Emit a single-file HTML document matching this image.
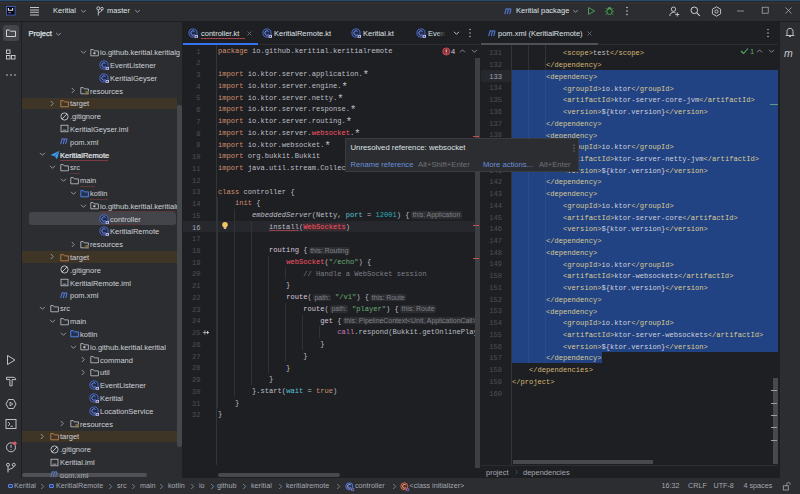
<!DOCTYPE html><html><head><meta charset="utf-8"><style>
html,body{margin:0;padding:0;width:800px;height:494px;overflow:hidden;background:#2B2D30;}
.a{position:absolute;}
.t{font-family:"Liberation Sans",sans-serif;white-space:nowrap;line-height:10px;}
.code{font-family:"Liberation Mono",monospace;font-size:7.1px;line-height:11.72px;height:11.72px;white-space:pre;color:#BCBEC4;}
.ln{font-family:"Liberation Mono",monospace;font-size:7.1px;line-height:11.72px;text-align:right;white-space:pre;}
.hint{display:inline-block;font-family:"Liberation Sans",sans-serif;font-size:6.9px;line-height:7.5px;height:7.5px;color:#7F8288;background:#2C2D31;border-radius:2px;padding:0 1.6px;position:relative;top:0.4px;vertical-align:baseline;}
svg{overflow:visible;}
.ast{display:inline-block;width:4.26px;text-align:center;font-size:10.5px;line-height:0;position:relative;top:2.1px;}
</style></head><body><div class="a" style="left:0px;top:0px;width:800px;height:494px;background:#2B2D30;"></div><div class="a" style="left:0px;top:0px;width:800px;height:1px;background:#2A4B6C;"></div><div class="a" style="left:0px;top:1px;width:800px;height:1px;background:#1F2A36;"></div><div class="a" style="left:0px;top:2px;width:800px;height:2px;background:#35302E;"></div><div class="a" style="left:0px;top:21px;width:800px;height:1px;background:#1E1F22;"></div><svg class="a" style="left:6px;top:6px;" width="10" height="10" viewBox="0 0 10 10" fill="none"><rect x="0.45" y="0.45" width="8.6" height="8.6" fill="#05060F" stroke="#4660C0" stroke-width="0.9"/><path d="M2.4 2.1V4.3H6.6V2.1" stroke="#E6E6E0" stroke-width="1.1"/><rect x="2.3" y="6.3" width="2.6" height="0.9" fill="#9A9AA8"/></svg><svg class="a" style="left:29px;top:5.5px;" width="11" height="10" viewBox="0 0 11 10" fill="none"><path d="M1 1.5H10M1 4H10M1 6.3H10M1 9H10" stroke="#C4C6CC" stroke-width="1.1"/></svg><div class="a t" style="left:53px;top:6px;color:#DFE1E5;font-size:7.5px;">Keritial</div><svg class="a" style="left:80px;top:8px;" width="7" height="6" viewBox="0 0 7 6" fill="none"><path d="M1.2 2L3.5 4.3L5.8 2" stroke="#9DA0A8" stroke-width="0.9"/></svg><svg class="a" style="left:96px;top:6px;" width="8" height="10" viewBox="0 0 8 10" fill="none"><circle cx="2.3" cy="2.3" r="1.5" stroke="#CED0D6" stroke-width="0.9"/><circle cx="6" cy="2.6" r="1.3" stroke="#CED0D6" stroke-width="0.9"/><path d="M2.3 3.8V9.5M6 3.9C6 6 3 5.5 2.5 7" stroke="#CED0D6" stroke-width="0.9"/></svg><div class="a t" style="left:107px;top:6px;color:#DFE1E5;font-size:7.5px;">master</div><svg class="a" style="left:134px;top:8px;" width="7" height="6" viewBox="0 0 7 6" fill="none"><path d="M1.2 2L3.5 4.3L5.8 2" stroke="#9DA0A8" stroke-width="0.9"/></svg><svg class="a" style="left:504px;top:8px;" width="9" height="7" viewBox="0 0 9 7" fill="none"><path d="M0.8 5.6L2.1 0.9M2.0 1.4C2.9 0.4 4.4 0.5 4.4 1.6L3.3 5.6M4.4 1.6C5.3 0.4 6.9 0.5 6.9 1.6L5.8 5.6" stroke="#5478D6" stroke-width="1.1" stroke-linecap="round"/></svg><div class="a t" style="left:516px;top:6px;color:#DFE1E5;font-size:7.5px;">Keritial package</div><svg class="a" style="left:571.5px;top:8px;" width="7" height="6" viewBox="0 0 7 6" fill="none"><path d="M1.2 2L3.5 4.3L5.8 2" stroke="#9DA0A8" stroke-width="0.9"/></svg><svg class="a" style="left:586px;top:5.8px;" width="10" height="10" viewBox="0 0 10 10" fill="none"><path d="M2.5 1.6L8.6 5L2.5 8.4Z" stroke="#529A5A" stroke-width="1.0" stroke-linejoin="round"/></svg><svg class="a" style="left:604px;top:5px;" width="11" height="11" viewBox="0 0 11 11" fill="none"><path d="M3.2 4.2C3.4 2.8 4.3 2 5.5 2C6.7 2 7.6 2.8 7.8 4.2Z" fill="#529A5A"/><ellipse cx="5.5" cy="6.7" rx="2.6" ry="2.8" stroke="#529A5A" stroke-width="1.0" fill="#1E3322"/><path d="M1.2 6.5H2.7M8.3 6.5H9.8M1.6 9.6L3.1 8.6M9.4 9.6L7.9 8.6M1.6 3.6L3.1 4.6M9.4 3.6L7.9 4.6" stroke="#529A5A" stroke-width="0.8"/></svg><svg class="a" style="left:625px;top:6px;" width="4" height="10" viewBox="0 0 4 10" fill="none"><circle cx="2" cy="1.5" r="0.8" fill="#CED0D6"/><circle cx="2" cy="5" r="0.8" fill="#CED0D6"/><circle cx="2" cy="8.5" r="0.8" fill="#CED0D6"/></svg><svg class="a" style="left:669px;top:5.5px;" width="11" height="11" viewBox="0 0 11 11" fill="none"><circle cx="4.5" cy="3.2" r="2.2" stroke="#CED0D6" stroke-width="0.9"/><path d="M0.8 10C1 7.3 2.5 6.3 4.5 6.3C5.3 6.3 6 6.5 6.5 6.8" stroke="#CED0D6" stroke-width="0.9"/><path d="M8.3 6.5V10.5M6.3 8.5H10.3" stroke="#CED0D6" stroke-width="0.9"/></svg><svg class="a" style="left:690px;top:6.3px;" width="11" height="11" viewBox="0 0 11 11" fill="none"><circle cx="4.3" cy="4.3" r="3.3" stroke="#CED0D6" stroke-width="1"/><path d="M6.8 6.8L9.8 9.8" stroke="#CED0D6" stroke-width="1.1"/></svg><svg class="a" style="left:711px;top:5.5px;" width="11" height="11" viewBox="0 0 11 11" fill="none"><path d="M5.5 0.8L9.6 3.2V7.8L5.5 10.2L1.4 7.8V3.2Z" stroke="#CED0D6" stroke-width="0.9" stroke-linejoin="round"/><circle cx="5.5" cy="5.5" r="1.6" stroke="#CED0D6" stroke-width="0.9"/></svg><svg class="a" style="left:736px;top:10px;" width="9" height="2" viewBox="0 0 9 2" fill="none"><path d="M1 1H8" stroke="#B4B7BD" stroke-width="0.7"/></svg><svg class="a" style="left:761px;top:6px;" width="9" height="9" viewBox="0 0 9 9" fill="none"><rect x="1.2" y="1.2" width="6" height="6" stroke="#B4B7BD" stroke-width="0.7"/></svg><svg class="a" style="left:784px;top:6px;" width="9" height="9" viewBox="0 0 9 9" fill="none"><path d="M1.5 1.5L7.5 7.5M7.5 1.5L1.5 7.5" stroke="#B4B7BD" stroke-width="0.75"/></svg><div class="a" style="left:21px;top:22px;width:1px;height:456px;background:#1E1F22;"></div><div class="a" style="left:3px;top:25px;width:16px;height:16px;background:#43454A;border-radius:3px;"></div><svg class="a" style="left:5px;top:27px;" width="12" height="12" viewBox="0 0 12 12" fill="none"><path d="M1.5 3V9.5H10.5V4.2H5.5L4.3 3Z" stroke="#DFE1E5" stroke-width="0.9" stroke-linejoin="round"/></svg><svg class="a" style="left:5px;top:49px;" width="12" height="12" viewBox="0 0 12 12" fill="none"><rect x="1.5" y="1" width="3.5" height="3.5" stroke="#CED0D6" stroke-width="0.9"/><rect x="1.5" y="6.5" width="3.5" height="3.5" stroke="#CED0D6" stroke-width="0.9"/><rect x="6.5" y="6.5" width="3.5" height="3.5" stroke="#CED0D6" stroke-width="0.9"/></svg><svg class="a" style="left:5px;top:73px;" width="12" height="4" viewBox="0 0 12 4" fill="none"><circle cx="2" cy="2" r="0.8" fill="#CED0D6"/><circle cx="6" cy="2" r="0.8" fill="#CED0D6"/><circle cx="10" cy="2" r="0.8" fill="#CED0D6"/></svg><svg class="a" style="left:5px;top:354px;" width="12" height="12" viewBox="0 0 12 12" fill="none"><path d="M2.5 1.5L10 6L2.5 10.5Z" stroke="#CED0D6" stroke-width="0.9" stroke-linejoin="round"/></svg><svg class="a" style="left:5px;top:375px;" width="12" height="12" viewBox="0 0 12 12" fill="none"><path d="M1.5 2.3H8.2C9.6 2.3 10.6 3.1 10.8 4.6H7.1V10.8H4.9V4.6H1.5Z" stroke="#CED0D6" stroke-width="0.9" stroke-linejoin="round"/></svg><svg class="a" style="left:5px;top:397.5px;" width="12" height="12" viewBox="0 0 12 12" fill="none"><path d="M1 6L3.5 1.5H8.5L11 6L8.5 10.5H3.5Z" stroke="#CED0D6" stroke-width="0.9" stroke-linejoin="round"/><path d="M5 4.2L7.8 6L5 7.8Z" stroke="#CED0D6" stroke-width="0.8" stroke-linejoin="round"/></svg><svg class="a" style="left:5px;top:418px;" width="12" height="12" viewBox="0 0 12 12" fill="none"><rect x="1" y="1.5" width="10" height="9" stroke="#CED0D6" stroke-width="0.9"/><path d="M3 4L5 6L3 8M5.5 8.3H8" stroke="#CED0D6" stroke-width="0.8"/></svg><svg class="a" style="left:5px;top:440.5px;" width="12" height="12" viewBox="0 0 12 12" fill="none"><circle cx="6" cy="6.3" r="4.5" stroke="#CED0D6" stroke-width="0.9"/><path d="M6 3.8V6.8M6 8V8.8" stroke="#CED0D6" stroke-width="0.9"/><circle cx="9.8" cy="2.2" r="1.8" fill="#E55765"/></svg><svg class="a" style="left:5px;top:462px;" width="12" height="12" viewBox="0 0 12 12" fill="none"><circle cx="3" cy="2.8" r="1.5" stroke="#CED0D6" stroke-width="0.9"/><circle cx="8.8" cy="2.8" r="1.5" stroke="#CED0D6" stroke-width="0.9"/><path d="M3 4.3V10.5M8.8 4.3C8.8 7 3.5 6.5 3 8.5" stroke="#CED0D6" stroke-width="0.9"/></svg><div class="a t" style="left:28.5px;top:29px;color:#DFE1E5;font-size:7.5px;-webkit-text-stroke:0.25px #DFE1E5;">Project</div><svg class="a" style="left:55px;top:31px;" width="7" height="6" viewBox="0 0 7 6" fill="none"><path d="M1.2 2L3.5 4.3L5.8 2" stroke="#9DA0A8" stroke-width="0.9"/></svg><div class="a" style="left:22px;top:45px;width:160px;height:433px;overflow:hidden;"></div><svg class="a" style="left:80px;top:48.9px;" width="7" height="6" viewBox="0 0 7 6" fill="none"><path d="M1 1.8L3.5 4.3L6 1.8" stroke="#9DA0A8" stroke-width="0.9"/></svg><svg class="a" style="left:90px;top:47.6px;" width="10" height="9" viewBox="0 0 10 9" fill="none"><path d="M0.8 1.6V7.8H8.4V2.9H4.3L3.3 1.6Z" stroke="#CED0D6" stroke-width="0.75" stroke-linejoin="round"/><rect x="3.4" y="4.3" width="2" height="1.9" fill="#CED0D6"/></svg><div class="a t" style="left:100px;top:48.1px;color:#CDD0D6;font-size:7.5px;">io.github.keritial.keritialg</div><svg class="a" style="left:99px;top:59.91px;" width="11" height="11" viewBox="0 0 11 11" fill="none"><circle cx="5" cy="5" r="4.1" fill="#1F2A4C" stroke="#5174DA" stroke-width="0.85"/><path d="M6.5 3.6C6.1 3.1 5.6 2.8 5 2.8C3.8 2.8 2.9 3.8 2.9 5C2.9 6.2 3.8 7.2 5 7.2C5.6 7.2 6.1 6.9 6.5 6.4" stroke="#8AA6F2" stroke-width="0.85"/><rect x="6.6" y="7" width="3.4" height="2.8" fill="#C4BEEA"/><rect x="7.6" y="7.8" width="1.4" height="1.2" fill="#3A3F7A"/></svg><div class="a t" style="left:110px;top:60.91px;color:#CDD0D6;font-size:7.5px;">EventListener</div><svg class="a" style="left:99px;top:72.72px;" width="11" height="11" viewBox="0 0 11 11" fill="none"><circle cx="5" cy="5" r="4.1" fill="#1F2A4C" stroke="#5174DA" stroke-width="0.85"/><path d="M6.5 3.6C6.1 3.1 5.6 2.8 5 2.8C3.8 2.8 2.9 3.8 2.9 5C2.9 6.2 3.8 7.2 5 7.2C5.6 7.2 6.1 6.9 6.5 6.4" stroke="#8AA6F2" stroke-width="0.85"/><rect x="6.6" y="7" width="3.4" height="2.8" fill="#C4BEEA"/><rect x="7.6" y="7.8" width="1.4" height="1.2" fill="#3A3F7A"/></svg><div class="a t" style="left:110px;top:73.72px;color:#CDD0D6;font-size:7.5px;">KeritialGeyser</div><svg class="a" style="left:70px;top:86.83px;" width="6" height="7" viewBox="0 0 6 7" fill="none"><path d="M1.8 1L4.3 3.5L1.8 6" stroke="#9DA0A8" stroke-width="0.9"/></svg><svg class="a" style="left:80px;top:86.03px;" width="10" height="9" viewBox="0 0 10 9" fill="none"><path d="M0.8 1.6V7.8H8.4V2.9H4.3L3.3 1.6Z" stroke="#CED0D6" stroke-width="0.75" stroke-linejoin="round"/><rect x="5" y="5.3" width="4" height="3.2" fill="#2B2D30"/><path d="M5.3 6H8.9M5.3 7.8H8.9" stroke="#CDB45E" stroke-width="0.9"/></svg><div class="a t" style="left:90px;top:86.53px;color:#CDD0D6;font-size:7.5px;">resources</div><div class="a" style="left:22px;top:97.54px;width:155px;height:11.8px;background:#3F3526;"></div><svg class="a" style="left:49px;top:99.64px;" width="6" height="7" viewBox="0 0 6 7" fill="none"><path d="M1.8 1L4.3 3.5L1.8 6" stroke="#9DA0A8" stroke-width="0.9"/></svg><svg class="a" style="left:60px;top:98.84px;" width="10" height="9" viewBox="0 0 10 9" fill="none"><path d="M0.8 1.6V7.8H8.4V2.9H4.3L3.3 1.6Z" stroke="#D6905B" stroke-width="0.75" stroke-linejoin="round"/></svg><div class="a t" style="left:70px;top:99.34px;color:#CDD0D6;font-size:7.5px;">target</div><svg class="a" style="left:60px;top:111.65px;" width="10" height="9" viewBox="0 0 10 9" fill="none"><circle cx="4.5" cy="4.5" r="3.6" stroke="#CED0D6" stroke-width="0.85"/><path d="M2 7L7 2" stroke="#CED0D6" stroke-width="0.85"/></svg><div class="a t" style="left:70px;top:112.15px;color:#CDD0D6;font-size:7.5px;">.gitignore</div><svg class="a" style="left:60px;top:124.46px;" width="10" height="9" viewBox="0 0 10 9" fill="none"><rect x="1" y="1.2" width="7" height="6.6" stroke="#CED0D6" stroke-width="0.75"/><path d="M2.6 6.2H6.4" stroke="#CED0D6" stroke-width="0.7"/></svg><div class="a t" style="left:70px;top:124.96px;color:#CDD0D6;font-size:7.5px;">KeritialGeyser.iml</div><svg class="a" style="left:60px;top:137.87px;" width="9" height="7" viewBox="0 0 9 7" fill="none"><path d="M0.8 5.6L2.1 0.9M2.0 1.4C2.9 0.4 4.4 0.5 4.4 1.6L3.3 5.6M4.4 1.6C5.3 0.4 6.9 0.5 6.9 1.6L5.8 5.6" stroke="#5478D6" stroke-width="1.1" stroke-linecap="round"/></svg><div class="a t" style="left:70px;top:137.77px;color:#CDD0D6;font-size:7.5px;">pom.xml</div><svg class="a" style="left:39px;top:151.38px;" width="7" height="6" viewBox="0 0 7 6" fill="none"><path d="M1 1.8L3.5 4.3L6 1.8" stroke="#9DA0A8" stroke-width="0.9"/></svg><svg class="a" style="left:50px;top:149.58px;" width="10" height="10" viewBox="0 0 10 10" fill="none"><path d="M0.5 5L9.5 0.8L7 9.2L4.8 6.2Z" fill="#3D9DF2"/><path d="M4.8 6.2L9.5 0.8" stroke="#2B2D30" stroke-width="0.5"/></svg><div class="a t" style="left:60px;top:150.58px;color:#E6E8EC;font-size:7.5px;-webkit-text-stroke:0.2px #E6E8EC;">KeritialRemote</div><div class="a" style="left:60px;top:160.18px;width:48px;height:1px;background:#7A3C42;"></div><svg class="a" style="left:49px;top:164.19px;" width="7" height="6" viewBox="0 0 7 6" fill="none"><path d="M1 1.8L3.5 4.3L6 1.8" stroke="#9DA0A8" stroke-width="0.9"/></svg><svg class="a" style="left:60px;top:162.89px;" width="10" height="9" viewBox="0 0 10 9" fill="none"><path d="M0.8 1.6V7.8H8.4V2.9H4.3L3.3 1.6Z" stroke="#CED0D6" stroke-width="0.75" stroke-linejoin="round"/></svg><div class="a t" style="left:70px;top:163.39px;color:#CDD0D6;font-size:7.5px;">src</div><div class="a" style="left:70px;top:172.99px;width:10px;height:1px;background:#5A3539;"></div><svg class="a" style="left:60px;top:177.0px;" width="7" height="6" viewBox="0 0 7 6" fill="none"><path d="M1 1.8L3.5 4.3L6 1.8" stroke="#9DA0A8" stroke-width="0.9"/></svg><svg class="a" style="left:70px;top:175.7px;" width="10" height="9" viewBox="0 0 10 9" fill="none"><path d="M0.8 1.6V7.8H8.4V2.9H4.3L3.3 1.6Z" stroke="#CED0D6" stroke-width="0.75" stroke-linejoin="round"/></svg><div class="a t" style="left:80px;top:176.2px;color:#CDD0D6;font-size:7.5px;">main</div><div class="a" style="left:80px;top:185.8px;width:15px;height:1px;background:#5A3539;"></div><svg class="a" style="left:70px;top:189.81px;" width="7" height="6" viewBox="0 0 7 6" fill="none"><path d="M1 1.8L3.5 4.3L6 1.8" stroke="#9DA0A8" stroke-width="0.9"/></svg><svg class="a" style="left:80px;top:188.51px;" width="10" height="9" viewBox="0 0 10 9" fill="none"><path d="M0.8 1.6V7.8H8.4V2.9H4.3L3.3 1.6Z" stroke="#548AF7" stroke-width="0.9" stroke-linejoin="round" fill="#25324d"/></svg><div class="a t" style="left:90px;top:189.01px;color:#CDD0D6;font-size:7.5px;">kotlin</div><div class="a" style="left:90px;top:198.61px;width:18px;height:1px;background:#5A3539;"></div><svg class="a" style="left:80px;top:202.62px;" width="7" height="6" viewBox="0 0 7 6" fill="none"><path d="M1 1.8L3.5 4.3L6 1.8" stroke="#9DA0A8" stroke-width="0.9"/></svg><svg class="a" style="left:90px;top:201.32px;" width="10" height="9" viewBox="0 0 10 9" fill="none"><path d="M0.8 1.6V7.8H8.4V2.9H4.3L3.3 1.6Z" stroke="#CED0D6" stroke-width="0.75" stroke-linejoin="round"/><rect x="3.4" y="4.3" width="2" height="1.9" fill="#CED0D6"/></svg><div class="a t" style="left:100px;top:201.82px;color:#CDD0D6;font-size:7.5px;">io.github.keritial.keritialre</div><div class="a" style="left:100px;top:211.42px;width:75px;height:1px;background:#5A3539;"></div><div class="a" style="left:29px;top:212.13px;width:147px;height:12.6px;background:#43454A;border-radius:3px;"></div><svg class="a" style="left:99px;top:213.63px;" width="11" height="11" viewBox="0 0 11 11" fill="none"><circle cx="5" cy="5" r="4.1" fill="#1F2A4C" stroke="#5174DA" stroke-width="0.85"/><path d="M6.5 3.6C6.1 3.1 5.6 2.8 5 2.8C3.8 2.8 2.9 3.8 2.9 5C2.9 6.2 3.8 7.2 5 7.2C5.6 7.2 6.1 6.9 6.5 6.4" stroke="#8AA6F2" stroke-width="0.85"/><rect x="6.6" y="7" width="3.4" height="2.8" fill="#C4BEEA"/><rect x="7.6" y="7.8" width="1.4" height="1.2" fill="#3A3F7A"/></svg><div class="a t" style="left:110px;top:214.63px;color:#CDD0D6;font-size:7.5px;">controller</div><div class="a" style="left:110px;top:224.23px;width:31px;height:1px;background:#5A3539;"></div><svg class="a" style="left:99px;top:226.44px;" width="11" height="11" viewBox="0 0 11 11" fill="none"><circle cx="5" cy="5" r="4.1" fill="#1F2A4C" stroke="#5174DA" stroke-width="0.85"/><path d="M6.5 3.6C6.1 3.1 5.6 2.8 5 2.8C3.8 2.8 2.9 3.8 2.9 5C2.9 6.2 3.8 7.2 5 7.2C5.6 7.2 6.1 6.9 6.5 6.4" stroke="#8AA6F2" stroke-width="0.85"/><rect x="6.6" y="7" width="3.4" height="2.8" fill="#C4BEEA"/><rect x="7.6" y="7.8" width="1.4" height="1.2" fill="#3A3F7A"/></svg><div class="a t" style="left:110px;top:227.44px;color:#CDD0D6;font-size:7.5px;">KeritialRemote</div><svg class="a" style="left:70px;top:240.55px;" width="6" height="7" viewBox="0 0 6 7" fill="none"><path d="M1.8 1L4.3 3.5L1.8 6" stroke="#9DA0A8" stroke-width="0.9"/></svg><svg class="a" style="left:80px;top:239.75px;" width="10" height="9" viewBox="0 0 10 9" fill="none"><path d="M0.8 1.6V7.8H8.4V2.9H4.3L3.3 1.6Z" stroke="#CED0D6" stroke-width="0.75" stroke-linejoin="round"/><rect x="5" y="5.3" width="4" height="3.2" fill="#2B2D30"/><path d="M5.3 6H8.9M5.3 7.8H8.9" stroke="#CDB45E" stroke-width="0.9"/></svg><div class="a t" style="left:90px;top:240.25px;color:#CDD0D6;font-size:7.5px;">resources</div><div class="a" style="left:22px;top:251.26px;width:155px;height:11.8px;background:#3F3526;"></div><svg class="a" style="left:49px;top:253.36px;" width="6" height="7" viewBox="0 0 6 7" fill="none"><path d="M1.8 1L4.3 3.5L1.8 6" stroke="#9DA0A8" stroke-width="0.9"/></svg><svg class="a" style="left:60px;top:252.56px;" width="10" height="9" viewBox="0 0 10 9" fill="none"><path d="M0.8 1.6V7.8H8.4V2.9H4.3L3.3 1.6Z" stroke="#D6905B" stroke-width="0.75" stroke-linejoin="round"/></svg><div class="a t" style="left:70px;top:253.06px;color:#CDD0D6;font-size:7.5px;">target</div><svg class="a" style="left:60px;top:265.37px;" width="10" height="9" viewBox="0 0 10 9" fill="none"><circle cx="4.5" cy="4.5" r="3.6" stroke="#CED0D6" stroke-width="0.85"/><path d="M2 7L7 2" stroke="#CED0D6" stroke-width="0.85"/></svg><div class="a t" style="left:70px;top:265.87px;color:#CDD0D6;font-size:7.5px;">.gitignore</div><svg class="a" style="left:60px;top:278.18px;" width="10" height="9" viewBox="0 0 10 9" fill="none"><rect x="1" y="1.2" width="7" height="6.6" stroke="#CED0D6" stroke-width="0.75"/><path d="M2.6 6.2H6.4" stroke="#CED0D6" stroke-width="0.7"/></svg><div class="a t" style="left:70px;top:278.68px;color:#CDD0D6;font-size:7.5px;">KeritialRemote.iml</div><svg class="a" style="left:60px;top:291.59px;" width="9" height="7" viewBox="0 0 9 7" fill="none"><path d="M0.8 5.6L2.1 0.9M2.0 1.4C2.9 0.4 4.4 0.5 4.4 1.6L3.3 5.6M4.4 1.6C5.3 0.4 6.9 0.5 6.9 1.6L5.8 5.6" stroke="#5478D6" stroke-width="1.1" stroke-linecap="round"/></svg><div class="a t" style="left:70px;top:291.49px;color:#CDD0D6;font-size:7.5px;">pom.xml</div><svg class="a" style="left:39px;top:305.1px;" width="7" height="6" viewBox="0 0 7 6" fill="none"><path d="M1 1.8L3.5 4.3L6 1.8" stroke="#9DA0A8" stroke-width="0.9"/></svg><svg class="a" style="left:50px;top:303.8px;" width="10" height="9" viewBox="0 0 10 9" fill="none"><path d="M0.8 1.6V7.8H8.4V2.9H4.3L3.3 1.6Z" stroke="#CED0D6" stroke-width="0.75" stroke-linejoin="round"/></svg><div class="a t" style="left:60px;top:304.3px;color:#CDD0D6;font-size:7.5px;">src</div><svg class="a" style="left:49px;top:317.91px;" width="7" height="6" viewBox="0 0 7 6" fill="none"><path d="M1 1.8L3.5 4.3L6 1.8" stroke="#9DA0A8" stroke-width="0.9"/></svg><svg class="a" style="left:60px;top:316.61px;" width="10" height="9" viewBox="0 0 10 9" fill="none"><path d="M0.8 1.6V7.8H8.4V2.9H4.3L3.3 1.6Z" stroke="#CED0D6" stroke-width="0.75" stroke-linejoin="round"/></svg><div class="a t" style="left:70px;top:317.11px;color:#CDD0D6;font-size:7.5px;">main</div><svg class="a" style="left:60px;top:330.72px;" width="7" height="6" viewBox="0 0 7 6" fill="none"><path d="M1 1.8L3.5 4.3L6 1.8" stroke="#9DA0A8" stroke-width="0.9"/></svg><svg class="a" style="left:70px;top:329.42px;" width="10" height="9" viewBox="0 0 10 9" fill="none"><path d="M0.8 1.6V7.8H8.4V2.9H4.3L3.3 1.6Z" stroke="#548AF7" stroke-width="0.9" stroke-linejoin="round" fill="#25324d"/></svg><div class="a t" style="left:80px;top:329.92px;color:#CDD0D6;font-size:7.5px;">kotlin</div><svg class="a" style="left:70px;top:343.53px;" width="7" height="6" viewBox="0 0 7 6" fill="none"><path d="M1 1.8L3.5 4.3L6 1.8" stroke="#9DA0A8" stroke-width="0.9"/></svg><svg class="a" style="left:80px;top:342.23px;" width="10" height="9" viewBox="0 0 10 9" fill="none"><path d="M0.8 1.6V7.8H8.4V2.9H4.3L3.3 1.6Z" stroke="#CED0D6" stroke-width="0.75" stroke-linejoin="round"/><rect x="3.4" y="4.3" width="2" height="1.9" fill="#CED0D6"/></svg><div class="a t" style="left:90px;top:342.73px;color:#CDD0D6;font-size:7.5px;">io.github.keritial.keritial</div><svg class="a" style="left:80px;top:355.84px;" width="6" height="7" viewBox="0 0 6 7" fill="none"><path d="M1.8 1L4.3 3.5L1.8 6" stroke="#9DA0A8" stroke-width="0.9"/></svg><svg class="a" style="left:90px;top:355.04px;" width="10" height="9" viewBox="0 0 10 9" fill="none"><path d="M0.8 1.6V7.8H8.4V2.9H4.3L3.3 1.6Z" stroke="#CED0D6" stroke-width="0.75" stroke-linejoin="round"/></svg><div class="a t" style="left:100px;top:355.54px;color:#CDD0D6;font-size:7.5px;">command</div><svg class="a" style="left:80px;top:368.65px;" width="6" height="7" viewBox="0 0 6 7" fill="none"><path d="M1.8 1L4.3 3.5L1.8 6" stroke="#9DA0A8" stroke-width="0.9"/></svg><svg class="a" style="left:90px;top:367.85px;" width="10" height="9" viewBox="0 0 10 9" fill="none"><path d="M0.8 1.6V7.8H8.4V2.9H4.3L3.3 1.6Z" stroke="#CED0D6" stroke-width="0.75" stroke-linejoin="round"/></svg><div class="a t" style="left:100px;top:368.35px;color:#CDD0D6;font-size:7.5px;">util</div><svg class="a" style="left:89px;top:380.16px;" width="11" height="11" viewBox="0 0 11 11" fill="none"><circle cx="5" cy="5" r="4.1" fill="#1F2A4C" stroke="#5174DA" stroke-width="0.85"/><path d="M6.5 3.6C6.1 3.1 5.6 2.8 5 2.8C3.8 2.8 2.9 3.8 2.9 5C2.9 6.2 3.8 7.2 5 7.2C5.6 7.2 6.1 6.9 6.5 6.4" stroke="#8AA6F2" stroke-width="0.85"/><rect x="6.6" y="7" width="3.4" height="2.8" fill="#C4BEEA"/><rect x="7.6" y="7.8" width="1.4" height="1.2" fill="#3A3F7A"/></svg><div class="a t" style="left:100px;top:381.16px;color:#CDD0D6;font-size:7.5px;">EventListener</div><svg class="a" style="left:89px;top:392.97px;" width="11" height="11" viewBox="0 0 11 11" fill="none"><circle cx="5" cy="5" r="4.1" fill="#1F2A4C" stroke="#5174DA" stroke-width="0.85"/><path d="M6.5 3.6C6.1 3.1 5.6 2.8 5 2.8C3.8 2.8 2.9 3.8 2.9 5C2.9 6.2 3.8 7.2 5 7.2C5.6 7.2 6.1 6.9 6.5 6.4" stroke="#8AA6F2" stroke-width="0.85"/><rect x="6.6" y="7" width="3.4" height="2.8" fill="#C4BEEA"/><rect x="7.6" y="7.8" width="1.4" height="1.2" fill="#3A3F7A"/></svg><div class="a t" style="left:100px;top:393.97px;color:#CDD0D6;font-size:7.5px;">Keritial</div><svg class="a" style="left:89px;top:405.78px;" width="11" height="11" viewBox="0 0 11 11" fill="none"><circle cx="5" cy="5" r="4.1" fill="#1F2A4C" stroke="#5174DA" stroke-width="0.85"/><path d="M6.5 3.6C6.1 3.1 5.6 2.8 5 2.8C3.8 2.8 2.9 3.8 2.9 5C2.9 6.2 3.8 7.2 5 7.2C5.6 7.2 6.1 6.9 6.5 6.4" stroke="#8AA6F2" stroke-width="0.85"/><rect x="6.6" y="7" width="3.4" height="2.8" fill="#C4BEEA"/><rect x="7.6" y="7.8" width="1.4" height="1.2" fill="#3A3F7A"/></svg><div class="a t" style="left:100px;top:406.78px;color:#CDD0D6;font-size:7.5px;">LocationService</div><svg class="a" style="left:59px;top:419.89px;" width="6" height="7" viewBox="0 0 6 7" fill="none"><path d="M1.8 1L4.3 3.5L1.8 6" stroke="#9DA0A8" stroke-width="0.9"/></svg><svg class="a" style="left:70px;top:419.09px;" width="10" height="9" viewBox="0 0 10 9" fill="none"><path d="M0.8 1.6V7.8H8.4V2.9H4.3L3.3 1.6Z" stroke="#CED0D6" stroke-width="0.75" stroke-linejoin="round"/><rect x="5" y="5.3" width="4" height="3.2" fill="#2B2D30"/><path d="M5.3 6H8.9M5.3 7.8H8.9" stroke="#CDB45E" stroke-width="0.9"/></svg><div class="a t" style="left:80px;top:419.59px;color:#CDD0D6;font-size:7.5px;">resources</div><div class="a" style="left:22px;top:430.6px;width:155px;height:11.8px;background:#3F3526;"></div><svg class="a" style="left:39px;top:432.7px;" width="6" height="7" viewBox="0 0 6 7" fill="none"><path d="M1.8 1L4.3 3.5L1.8 6" stroke="#9DA0A8" stroke-width="0.9"/></svg><svg class="a" style="left:50px;top:431.9px;" width="10" height="9" viewBox="0 0 10 9" fill="none"><path d="M0.8 1.6V7.8H8.4V2.9H4.3L3.3 1.6Z" stroke="#D6905B" stroke-width="0.75" stroke-linejoin="round"/></svg><div class="a t" style="left:60px;top:432.4px;color:#CDD0D6;font-size:7.5px;">target</div><svg class="a" style="left:50px;top:444.71px;" width="10" height="9" viewBox="0 0 10 9" fill="none"><circle cx="4.5" cy="4.5" r="3.6" stroke="#CED0D6" stroke-width="0.85"/><path d="M2 7L7 2" stroke="#CED0D6" stroke-width="0.85"/></svg><div class="a t" style="left:60px;top:445.21px;color:#CDD0D6;font-size:7.5px;">.gitignore</div><svg class="a" style="left:50px;top:457.52px;" width="10" height="9" viewBox="0 0 10 9" fill="none"><rect x="1" y="1.2" width="7" height="6.6" stroke="#CED0D6" stroke-width="0.75"/><path d="M2.6 6.2H6.4" stroke="#CED0D6" stroke-width="0.7"/></svg><div class="a t" style="left:60px;top:458.02px;color:#CDD0D6;font-size:7.5px;">Keritial.iml</div><svg class="a" style="left:50px;top:470.93px;" width="9" height="7" viewBox="0 0 9 7" fill="none"><path d="M0.8 5.6L2.1 0.9M2.0 1.4C2.9 0.4 4.4 0.5 4.4 1.6L3.3 5.6M4.4 1.6C5.3 0.4 6.9 0.5 6.9 1.6L5.8 5.6" stroke="#5478D6" stroke-width="1.1" stroke-linecap="round"/></svg><div class="a t" style="left:60px;top:470.83px;color:#CDD0D6;font-size:7.5px;">pom.xml</div><div class="a" style="left:177px;top:105px;width:4.5px;height:342px;background:#45474B;border-radius:2px;"></div><div class="a" style="left:22px;top:473px;width:125px;height:4px;background:rgba(110,112,118,0.55);border-radius:2px;"></div><div class="a" style="left:182px;top:22px;width:298px;height:456px;background:#1E1F22;"></div><div class="a" style="left:182px;top:44px;width:298px;height:1px;background:#2B2D30;"></div><svg class="a" style="left:188px;top:28.2px;" width="11" height="11" viewBox="0 0 11 11" fill="none"><circle cx="5" cy="5" r="4.1" fill="#1F2A4C" stroke="#5174DA" stroke-width="0.85"/><path d="M6.5 3.6C6.1 3.1 5.6 2.8 5 2.8C3.8 2.8 2.9 3.8 2.9 5C2.9 6.2 3.8 7.2 5 7.2C5.6 7.2 6.1 6.9 6.5 6.4" stroke="#8AA6F2" stroke-width="0.85"/><rect x="6.6" y="7" width="3.4" height="2.8" fill="#C4BEEA"/><rect x="7.6" y="7.8" width="1.4" height="1.2" fill="#3A3F7A"/></svg><div class="a t" style="left:201px;top:28.5px;color:#DFE1E5;font-size:7.5px;">controller.kt</div><div class="a" style="left:201px;top:38px;width:44px;height:1px;background:repeating-linear-gradient(90deg,#B8444C 0 2px,#7a3a40 2px 3px);"></div><svg class="a" style="left:246px;top:30px;" width="7" height="7" viewBox="0 0 7 7" fill="none"><path d="M1.5 1.5L5.5 5.5M5.5 1.5L1.5 5.5" stroke="#6F737A" stroke-width="0.8"/></svg><div class="a" style="left:183px;top:43px;width:75px;height:2px;background:#3574F0;"></div><svg class="a" style="left:262px;top:28.2px;" width="11" height="11" viewBox="0 0 11 11" fill="none"><circle cx="5" cy="5" r="4.1" fill="#1F2A4C" stroke="#5174DA" stroke-width="0.85"/><path d="M6.5 3.6C6.1 3.1 5.6 2.8 5 2.8C3.8 2.8 2.9 3.8 2.9 5C2.9 6.2 3.8 7.2 5 7.2C5.6 7.2 6.1 6.9 6.5 6.4" stroke="#8AA6F2" stroke-width="0.85"/><rect x="6.6" y="7" width="3.4" height="2.8" fill="#C4BEEA"/><rect x="7.6" y="7.8" width="1.4" height="1.2" fill="#3A3F7A"/></svg><div class="a t" style="left:274px;top:28.5px;color:#DFE1E5;font-size:7.5px;">KeritialRemote.kt</div><svg class="a" style="left:351px;top:28.2px;" width="11" height="11" viewBox="0 0 11 11" fill="none"><circle cx="5" cy="5" r="4.1" fill="#1F2A4C" stroke="#5174DA" stroke-width="0.85"/><path d="M6.5 3.6C6.1 3.1 5.6 2.8 5 2.8C3.8 2.8 2.9 3.8 2.9 5C2.9 6.2 3.8 7.2 5 7.2C5.6 7.2 6.1 6.9 6.5 6.4" stroke="#8AA6F2" stroke-width="0.85"/><rect x="6.6" y="7" width="3.4" height="2.8" fill="#C4BEEA"/><rect x="7.6" y="7.8" width="1.4" height="1.2" fill="#3A3F7A"/></svg><div class="a t" style="left:363px;top:28.5px;color:#DFE1E5;font-size:7.5px;">Keritial.kt</div><svg class="a" style="left:416px;top:28.2px;" width="11" height="11" viewBox="0 0 11 11" fill="none"><circle cx="5" cy="5" r="4.1" fill="#1F2A4C" stroke="#5174DA" stroke-width="0.85"/><path d="M6.5 3.6C6.1 3.1 5.6 2.8 5 2.8C3.8 2.8 2.9 3.8 2.9 5C2.9 6.2 3.8 7.2 5 7.2C5.6 7.2 6.1 6.9 6.5 6.4" stroke="#8AA6F2" stroke-width="0.85"/><rect x="6.6" y="7" width="3.4" height="2.8" fill="#C4BEEA"/><rect x="7.6" y="7.8" width="1.4" height="1.2" fill="#3A3F7A"/></svg><div class="a t" style="left:428px;top:28.5px;color:#DFE1E5;font-size:7.5px;">Even</div><div class="a" style="left:436px;top:23px;width:12px;height:20px;background:linear-gradient(90deg,rgba(30,31,34,0),#1E1F22 85%);"></div><svg class="a" style="left:453px;top:30px;" width="7" height="6" viewBox="0 0 7 6" fill="none"><path d="M1 1.8L3.5 4.3L6 1.8" stroke="#CED0D6" stroke-width="0.9"/></svg><svg class="a" style="left:468px;top:28px;" width="4" height="10" viewBox="0 0 4 10" fill="none"><circle cx="2" cy="1.5" r="0.7" fill="#CED0D6"/><circle cx="2" cy="5" r="0.7" fill="#CED0D6"/><circle cx="2" cy="8.5" r="0.7" fill="#CED0D6"/></svg><div class="a" style="left:183px;top:220.62px;width:292px;height:11.735px;background:#26282E;"></div><div class="a" style="left:216px;top:45px;width:1px;height:420px;background:#313438;"></div><div class="a" style="left:217.0px;top:197.16px;width:0.8px;height:211.22px;background:#303236;"></div><div class="a" style="left:234.04px;top:208.89px;width:0.8px;height:187.76px;background:#303236;"></div><div class="a" style="left:251.08px;top:220.62px;width:0.8px;height:164.3px;background:#303236;"></div><div class="a" style="left:268.12px;top:255.83px;width:0.8px;height:117.35px;background:#303236;"></div><div class="a" style="left:285.16px;top:267.56px;width:0.8px;height:11.74px;background:#303236;"></div><div class="a" style="left:285.16px;top:302.77px;width:0.8px;height:58.67px;background:#303236;"></div><div class="a" style="left:302.2px;top:314.5px;width:0.8px;height:35.21px;background:#303236;"></div><div class="a" style="left:319.24px;top:326.24px;width:0.8px;height:11.74px;background:#303236;"></div><div class="a ln" style="left:181.5px;top:46.5px;width:19px;color:#4B5059;">1</div><div class="a ln" style="left:181.5px;top:58.24px;width:19px;color:#4B5059;">2</div><div class="a ln" style="left:181.5px;top:69.97px;width:19px;color:#4B5059;">3</div><div class="a ln" style="left:181.5px;top:81.71px;width:19px;color:#4B5059;">4</div><div class="a ln" style="left:181.5px;top:93.44px;width:19px;color:#4B5059;">5</div><div class="a ln" style="left:181.5px;top:105.18px;width:19px;color:#4B5059;">6</div><div class="a ln" style="left:181.5px;top:116.91px;width:19px;color:#4B5059;">7</div><div class="a ln" style="left:181.5px;top:128.65px;width:19px;color:#4B5059;">8</div><div class="a ln" style="left:181.5px;top:140.38px;width:19px;color:#4B5059;">9</div><div class="a ln" style="left:181.5px;top:152.12px;width:19px;color:#4B5059;">10</div><div class="a ln" style="left:181.5px;top:163.85px;width:19px;color:#4B5059;">11</div><div class="a ln" style="left:181.5px;top:175.58px;width:19px;color:#4B5059;">12</div><div class="a ln" style="left:181.5px;top:187.32px;width:19px;color:#4B5059;">13</div><div class="a ln" style="left:181.5px;top:199.06px;width:19px;color:#4B5059;">14</div><div class="a ln" style="left:181.5px;top:210.79px;width:19px;color:#4B5059;">15</div><div class="a ln" style="left:181.5px;top:222.52px;width:19px;color:#A1A3AB;">16</div><div class="a ln" style="left:181.5px;top:234.26px;width:19px;color:#4B5059;">17</div><div class="a ln" style="left:181.5px;top:245.99px;width:19px;color:#4B5059;">18</div><div class="a ln" style="left:181.5px;top:257.73px;width:19px;color:#4B5059;">19</div><div class="a ln" style="left:181.5px;top:269.46px;width:19px;color:#4B5059;">20</div><div class="a ln" style="left:181.5px;top:281.2px;width:19px;color:#4B5059;">21</div><div class="a ln" style="left:181.5px;top:292.94px;width:19px;color:#4B5059;">22</div><div class="a ln" style="left:181.5px;top:304.67px;width:19px;color:#4B5059;">23</div><div class="a ln" style="left:181.5px;top:316.4px;width:19px;color:#4B5059;">24</div><div class="a ln" style="left:181.5px;top:328.14px;width:19px;color:#4B5059;">25</div><div class="a ln" style="left:181.5px;top:339.88px;width:19px;color:#4B5059;">26</div><div class="a ln" style="left:181.5px;top:351.61px;width:19px;color:#4B5059;">27</div><div class="a ln" style="left:181.5px;top:363.34px;width:19px;color:#4B5059;">28</div><div class="a ln" style="left:181.5px;top:375.08px;width:19px;color:#4B5059;">29</div><div class="a ln" style="left:181.5px;top:386.82px;width:19px;color:#4B5059;">30</div><div class="a ln" style="left:181.5px;top:398.55px;width:19px;color:#4B5059;">31</div><div class="a ln" style="left:181.5px;top:410.28px;width:19px;color:#4B5059;">32</div><div class="a" style="left:218px;top:45px;width:257px;height:420px;overflow:hidden;"><div class="a code" style="left:0px;top:0.7px;"><span style="color:#CF8E6D;">package</span>&nbsp;io.github.keritial.keritialremote</div><div class="a code" style="left:0px;top:24.17px;"><span style="color:#CF8E6D;">import</span>&nbsp;io.ktor.server.application.<span class="ast">*</span></div><div class="a code" style="left:0px;top:35.91px;"><span style="color:#CF8E6D;">import</span>&nbsp;io.ktor.server.engine.<span class="ast">*</span></div><div class="a code" style="left:0px;top:47.64px;"><span style="color:#CF8E6D;">import</span>&nbsp;io.ktor.server.netty.<span class="ast">*</span></div><div class="a code" style="left:0px;top:59.38px;"><span style="color:#CF8E6D;">import</span>&nbsp;io.ktor.server.response.<span class="ast">*</span></div><div class="a code" style="left:0px;top:71.11px;"><span style="color:#CF8E6D;">import</span>&nbsp;io.ktor.server.routing.<span class="ast">*</span></div><div class="a code" style="left:0px;top:82.85px;"><span style="color:#CF8E6D;">import</span>&nbsp;io.ktor.server.<span style="color:#F75464;">websocket</span>.<span class="ast">*</span></div><div class="a code" style="left:0px;top:94.58px;"><span style="color:#CF8E6D;">import</span>&nbsp;io.ktor.websocket.<span class="ast">*</span></div><div class="a code" style="left:0px;top:106.32px;"><span style="color:#CF8E6D;">import</span>&nbsp;org.bukkit.Bukkit</div><div class="a code" style="left:0px;top:118.05px;"><span style="color:#CF8E6D;">import</span>&nbsp;java.util.stream.Collectors</div><div class="a code" style="left:0px;top:141.52px;"><span style="color:#CF8E6D;">class</span>&nbsp;controller&nbsp;{</div><div class="a code" style="left:0px;top:153.26px;">&nbsp;&nbsp;&nbsp;&nbsp;<span style="color:#CF8E6D;">init</span>&nbsp;{</div><div class="a code" style="left:0px;top:164.99px;">&nbsp;&nbsp;&nbsp;&nbsp;&nbsp;&nbsp;&nbsp;&nbsp;<span style="font-style:italic;">embeddedServer</span>(Netty,&nbsp;<span style="color:#56C1D6;">port</span>&nbsp;=&nbsp;<span style="color:#2AACB8;">12001</span>)&nbsp;{<span class="hint" style="margin-left:1.2px;">this: Application</span></div><div class="a code" style="left:0px;top:176.72px;">&nbsp;&nbsp;&nbsp;&nbsp;&nbsp;&nbsp;&nbsp;&nbsp;&nbsp;&nbsp;&nbsp;&nbsp;<span style="text-decoration:underline;text-decoration-color:#9A4049;">install</span>(<span style="color:#F75464;background:#3E2B30;">WebSockets</span>)</div><div class="a code" style="left:0px;top:200.19px;">&nbsp;&nbsp;&nbsp;&nbsp;&nbsp;&nbsp;&nbsp;&nbsp;&nbsp;&nbsp;&nbsp;&nbsp;<span style="color:#D8C8DC;">routing</span>&nbsp;{<span class="hint" style="margin-left:1.2px;">this: Routing</span></div><div class="a code" style="left:0px;top:211.93px;">&nbsp;&nbsp;&nbsp;&nbsp;&nbsp;&nbsp;&nbsp;&nbsp;&nbsp;&nbsp;&nbsp;&nbsp;&nbsp;&nbsp;&nbsp;&nbsp;<span style="color:#F75464;">webSocket</span>(<span style="color:#6AAB73;">&quot;/echo&quot;</span>)&nbsp;{</div><div class="a code" style="left:0px;top:223.66px;">&nbsp;&nbsp;&nbsp;&nbsp;&nbsp;&nbsp;&nbsp;&nbsp;&nbsp;&nbsp;&nbsp;&nbsp;&nbsp;&nbsp;&nbsp;&nbsp;&nbsp;&nbsp;&nbsp;&nbsp;<span style="color:#7A7E85;">//&nbsp;Handle&nbsp;a&nbsp;WebSocket&nbsp;session</span></div><div class="a code" style="left:0px;top:235.4px;">&nbsp;&nbsp;&nbsp;&nbsp;&nbsp;&nbsp;&nbsp;&nbsp;&nbsp;&nbsp;&nbsp;&nbsp;&nbsp;&nbsp;&nbsp;&nbsp;}</div><div class="a code" style="left:0px;top:247.14px;">&nbsp;&nbsp;&nbsp;&nbsp;&nbsp;&nbsp;&nbsp;&nbsp;&nbsp;&nbsp;&nbsp;&nbsp;&nbsp;&nbsp;&nbsp;&nbsp;<span style="color:#D8C8DC;">route</span>(<span class="hint" style="margin:0 3.5px 0 1.2px;">path:</span><span style="color:#6AAB73;">&quot;/v1&quot;</span>)&nbsp;{<span class="hint" style="margin-left:1.2px;">this: Route</span></div><div class="a code" style="left:0px;top:258.87px;">&nbsp;&nbsp;&nbsp;&nbsp;&nbsp;&nbsp;&nbsp;&nbsp;&nbsp;&nbsp;&nbsp;&nbsp;&nbsp;&nbsp;&nbsp;&nbsp;&nbsp;&nbsp;&nbsp;&nbsp;<span style="color:#D8C8DC;">route</span>(<span class="hint" style="margin:0 3.5px 0 1.2px;">path:</span><span style="color:#6AAB73;">&quot;player&quot;</span>)&nbsp;{<span class="hint" style="margin-left:1.2px;">this: Route</span></div><div class="a code" style="left:0px;top:270.6px;">&nbsp;&nbsp;&nbsp;&nbsp;&nbsp;&nbsp;&nbsp;&nbsp;&nbsp;&nbsp;&nbsp;&nbsp;&nbsp;&nbsp;&nbsp;&nbsp;&nbsp;&nbsp;&nbsp;&nbsp;&nbsp;&nbsp;&nbsp;&nbsp;<span style="color:#D8C8DC;">get</span>&nbsp;{<span class="hint" style="margin-left:1.2px;">this: PipelineContext&lt;Unit, ApplicationCall&gt;</span></div><div class="a code" style="left:0px;top:282.34px;">&nbsp;&nbsp;&nbsp;&nbsp;&nbsp;&nbsp;&nbsp;&nbsp;&nbsp;&nbsp;&nbsp;&nbsp;&nbsp;&nbsp;&nbsp;&nbsp;&nbsp;&nbsp;&nbsp;&nbsp;&nbsp;&nbsp;&nbsp;&nbsp;&nbsp;&nbsp;&nbsp;&nbsp;<span style="color:#C77DBB;">call</span>.respond(Bukkit.getOnlinePlayers())</div><div class="a code" style="left:0px;top:294.08px;">&nbsp;&nbsp;&nbsp;&nbsp;&nbsp;&nbsp;&nbsp;&nbsp;&nbsp;&nbsp;&nbsp;&nbsp;&nbsp;&nbsp;&nbsp;&nbsp;&nbsp;&nbsp;&nbsp;&nbsp;&nbsp;&nbsp;&nbsp;&nbsp;}</div><div class="a code" style="left:0px;top:305.81px;">&nbsp;&nbsp;&nbsp;&nbsp;&nbsp;&nbsp;&nbsp;&nbsp;&nbsp;&nbsp;&nbsp;&nbsp;&nbsp;&nbsp;&nbsp;&nbsp;&nbsp;&nbsp;&nbsp;&nbsp;}</div><div class="a code" style="left:0px;top:317.54px;">&nbsp;&nbsp;&nbsp;&nbsp;&nbsp;&nbsp;&nbsp;&nbsp;&nbsp;&nbsp;&nbsp;&nbsp;&nbsp;&nbsp;&nbsp;&nbsp;}</div><div class="a code" style="left:0px;top:329.28px;">&nbsp;&nbsp;&nbsp;&nbsp;&nbsp;&nbsp;&nbsp;&nbsp;&nbsp;&nbsp;&nbsp;&nbsp;}</div><div class="a code" style="left:0px;top:341.02px;">&nbsp;&nbsp;&nbsp;&nbsp;&nbsp;&nbsp;&nbsp;&nbsp;}.start(<span style="color:#56C1D6;">wait</span>&nbsp;=&nbsp;<span style="color:#CF8E6D;">true</span>)</div><div class="a code" style="left:0px;top:352.75px;">&nbsp;&nbsp;&nbsp;&nbsp;}</div><div class="a code" style="left:0px;top:364.48px;">}</div></div><svg class="a" style="left:202px;top:328.5px;" width="8" height="7" viewBox="0 0 8 7" fill="none"><path d="M0.8 3.5H5.5M2.9 1.3V5.7" stroke="#B9BCC2" stroke-width="0.8"/><path d="M5 1.8L7.2 3.5L5 5.2Z" fill="#D0D3D8"/></svg><svg class="a" style="left:221px;top:220.5px;" width="8" height="10" viewBox="0 0 8 10" fill="none"><circle cx="4" cy="3.8" r="2.8" fill="#F2C55C"/><rect x="2.8" y="6.3" width="2.4" height="1.6" fill="#E8D6A0"/></svg><svg class="a" style="left:441.5px;top:46.5px;" width="9" height="9" viewBox="0 0 9 9" fill="none"><circle cx="4.3" cy="4.5" r="3.6" fill="#8E2F36" stroke="#D0545C" stroke-width="0.8"/><path d="M4.3 2.5V5.2M4.3 6.1V6.8" stroke="#F2D4D6" stroke-width="0.9"/></svg><div class="a t" style="left:451px;top:46.5px;color:#CED0D6;font-size:7.5px;">4</div><svg class="a" style="left:459px;top:48px;" width="7" height="6" viewBox="0 0 7 6" fill="none"><path d="M1 4.3L3.5 1.8L6 4.3" stroke="#9DA0A8" stroke-width="0.8"/></svg><svg class="a" style="left:471px;top:48px;" width="7" height="6" viewBox="0 0 7 6" fill="none"><path d="M1 1.8L3.5 4.3L6 1.8" stroke="#9DA0A8" stroke-width="0.8"/></svg><div class="a" style="left:475px;top:58px;width:5px;height:410px;background:#3E3F43;border-radius:0;"></div><div class="a" style="left:473px;top:135.5px;width:6px;height:1.2px;background:#C94F4F;"></div><div class="a" style="left:473px;top:225px;width:6px;height:1.2px;background:#C94F4F;"></div><div class="a" style="left:473px;top:258px;width:6px;height:1.2px;background:#C94F4F;"></div><div class="a" style="left:218px;top:473px;width:122px;height:4px;background:#48494D;border-radius:2px;"></div><div class="a" style="left:480px;top:22px;width:1px;height:456px;background:#1E1F22;"></div><div class="a" style="left:481px;top:22px;width:298px;height:456px;background:#1E1F22;"></div><div class="a" style="left:481px;top:44px;width:298px;height:1px;background:#2B2D30;"></div><svg class="a" style="left:487.5px;top:30px;" width="9" height="7" viewBox="0 0 9 7" fill="none"><path d="M0.8 5.6L2.1 0.9M2.0 1.4C2.9 0.4 4.4 0.5 4.4 1.6L3.3 5.6M4.4 1.6C5.3 0.4 6.9 0.5 6.9 1.6L5.8 5.6" stroke="#5478D6" stroke-width="1.1" stroke-linecap="round"/></svg><div class="a t" style="left:498px;top:28.5px;color:#DFE1E5;font-size:7.5px;">pom.xml (KeritialRemote)</div><svg class="a" style="left:586px;top:30px;" width="7" height="7" viewBox="0 0 7 7" fill="none"><path d="M1.5 1.5L5.5 5.5M5.5 1.5L1.5 5.5" stroke="#6F737A" stroke-width="0.8"/></svg><div class="a" style="left:481px;top:43px;width:117px;height:1.5px;background:#4E5157;"></div><svg class="a" style="left:766px;top:28px;" width="4" height="10" viewBox="0 0 4 10" fill="none"><circle cx="2" cy="1.5" r="0.7" fill="#CED0D6"/><circle cx="2" cy="5" r="0.7" fill="#CED0D6"/><circle cx="2" cy="8.5" r="0.7" fill="#CED0D6"/></svg><svg class="a" style="left:740px;top:47px;" width="9" height="8" viewBox="0 0 9 8" fill="none"><path d="M1 4L3.5 6.5L8 1.5" stroke="#5FAD65" stroke-width="1.1"/></svg><div class="a t" style="left:750px;top:46.5px;color:#5FAD65;font-size:7.5px;">1</div><svg class="a" style="left:756px;top:48px;" width="7" height="6" viewBox="0 0 7 6" fill="none"><path d="M1 4.3L3.5 1.8L6 4.3" stroke="#9DA0A8" stroke-width="0.8"/></svg><svg class="a" style="left:768px;top:48px;" width="7" height="6" viewBox="0 0 7 6" fill="none"><path d="M1 1.8L3.5 4.3L6 1.8" stroke="#9DA0A8" stroke-width="0.8"/></svg><div class="a" style="left:481px;top:69.93px;width:30px;height:11.735px;background:#26282E;"></div><div class="a" style="left:512px;top:69.93px;width:266px;height:281.64px;background:#214283;"></div><div class="a" style="left:512px;top:351.57px;width:89.5px;height:11.735px;background:#214283;"></div><div class="a" style="left:511px;top:45px;width:1px;height:420px;background:#313438;"></div><div class="a" style="left:528.24px;top:45px;width:0.8px;height:24.93px;background:#303236;"></div><div class="a" style="left:528.24px;top:69.93px;width:0.8px;height:293.37px;background:#2C4B8E;"></div><div class="a" style="left:545.28px;top:45px;width:0.8px;height:24.93px;background:#303236;"></div><div class="a" style="left:545.28px;top:69.93px;width:0.8px;height:293.37px;background:#2C4B8E;"></div><div class="a ln" style="left:481px;top:48.26px;width:21px;color:#4B5059;">131</div><div class="a ln" style="left:481px;top:60.0px;width:21px;color:#4B5059;">132</div><div class="a ln" style="left:481px;top:71.73px;width:21px;color:#A1A3AB;">133</div><div class="a ln" style="left:481px;top:83.46px;width:21px;color:#4B5059;">134</div><div class="a ln" style="left:481px;top:95.2px;width:21px;color:#4B5059;">135</div><div class="a ln" style="left:481px;top:106.93px;width:21px;color:#4B5059;">136</div><div class="a ln" style="left:481px;top:118.67px;width:21px;color:#4B5059;">137</div><div class="a ln" style="left:481px;top:130.4px;width:21px;color:#4B5059;">138</div><div class="a ln" style="left:481px;top:142.14px;width:21px;color:#4B5059;">139</div><div class="a ln" style="left:481px;top:153.87px;width:21px;color:#4B5059;">140</div><div class="a ln" style="left:481px;top:165.61px;width:21px;color:#4B5059;">141</div><div class="a ln" style="left:481px;top:177.34px;width:21px;color:#4B5059;">142</div><div class="a ln" style="left:481px;top:189.08px;width:21px;color:#4B5059;">143</div><div class="a ln" style="left:481px;top:200.82px;width:21px;color:#4B5059;">144</div><div class="a ln" style="left:481px;top:212.55px;width:21px;color:#4B5059;">145</div><div class="a ln" style="left:481px;top:224.28px;width:21px;color:#4B5059;">146</div><div class="a ln" style="left:481px;top:236.02px;width:21px;color:#4B5059;">147</div><div class="a ln" style="left:481px;top:247.76px;width:21px;color:#4B5059;">148</div><div class="a ln" style="left:481px;top:259.49px;width:21px;color:#4B5059;">149</div><div class="a ln" style="left:481px;top:271.22px;width:21px;color:#4B5059;">150</div><div class="a ln" style="left:481px;top:282.96px;width:21px;color:#4B5059;">151</div><div class="a ln" style="left:481px;top:294.69px;width:21px;color:#4B5059;">152</div><div class="a ln" style="left:481px;top:306.43px;width:21px;color:#4B5059;">153</div><div class="a ln" style="left:481px;top:318.16px;width:21px;color:#4B5059;">154</div><div class="a ln" style="left:481px;top:329.9px;width:21px;color:#4B5059;">155</div><div class="a ln" style="left:481px;top:341.63px;width:21px;color:#4B5059;">156</div><div class="a ln" style="left:481px;top:353.37px;width:21px;color:#4B5059;">157</div><div class="a ln" style="left:481px;top:365.1px;width:21px;color:#4B5059;">158</div><div class="a ln" style="left:481px;top:376.84px;width:21px;color:#4B5059;">159</div><div class="a ln" style="left:481px;top:388.57px;width:21px;color:#4B5059;">160</div><div class="a" style="left:512px;top:45px;width:261px;height:415px;overflow:hidden;"><div class="a code" style="left:0px;top:3.36px;">&nbsp;&nbsp;&nbsp;&nbsp;&nbsp;&nbsp;&nbsp;&nbsp;&nbsp;&nbsp;&nbsp;&nbsp;<span style="color:#D5B778;">&lt;scope&gt;</span>test<span style="color:#D5B778;">&lt;/scope&gt;</span></div><div class="a code" style="left:0px;top:15.1px;">&nbsp;&nbsp;&nbsp;&nbsp;&nbsp;&nbsp;&nbsp;&nbsp;<span style="color:#D5B778;">&lt;/dependency&gt;</span></div><div class="a code" style="left:0px;top:26.83px;"><span style="color:#CDD0DA;">&nbsp;&nbsp;&nbsp;&nbsp;&nbsp;&nbsp;&nbsp;&nbsp;</span><span style="color:#D9CB94;">&lt;dependency&gt;</span></div><div class="a code" style="left:0px;top:38.56px;"><span style="color:#CDD0DA;">&nbsp;&nbsp;&nbsp;&nbsp;&nbsp;&nbsp;&nbsp;&nbsp;&nbsp;&nbsp;&nbsp;&nbsp;</span><span style="color:#D9CB94;">&lt;groupId&gt;</span><span style="color:#CDD0DA;">io.ktor</span><span style="color:#D9CB94;">&lt;/groupId&gt;</span></div><div class="a code" style="left:0px;top:50.3px;"><span style="color:#CDD0DA;">&nbsp;&nbsp;&nbsp;&nbsp;&nbsp;&nbsp;&nbsp;&nbsp;&nbsp;&nbsp;&nbsp;&nbsp;</span><span style="color:#D9CB94;">&lt;artifactId&gt;</span><span style="color:#CDD0DA;">ktor-server-core-jvm</span><span style="color:#D9CB94;">&lt;/artifactId&gt;</span></div><div class="a code" style="left:0px;top:62.03px;"><span style="color:#CDD0DA;">&nbsp;&nbsp;&nbsp;&nbsp;&nbsp;&nbsp;&nbsp;&nbsp;&nbsp;&nbsp;&nbsp;&nbsp;</span><span style="color:#D9CB94;">&lt;version&gt;</span><span style="color:#CDD0DA;">${ktor.version}</span><span style="color:#D9CB94;">&lt;/version&gt;</span></div><div class="a code" style="left:0px;top:73.77px;"><span style="color:#CDD0DA;">&nbsp;&nbsp;&nbsp;&nbsp;&nbsp;&nbsp;&nbsp;&nbsp;</span><span style="color:#D9CB94;">&lt;/dependency&gt;</span></div><div class="a code" style="left:0px;top:85.5px;"><span style="color:#CDD0DA;">&nbsp;&nbsp;&nbsp;&nbsp;&nbsp;&nbsp;&nbsp;&nbsp;</span><span style="color:#D9CB94;">&lt;dependency&gt;</span></div><div class="a code" style="left:0px;top:97.24px;"><span style="color:#CDD0DA;">&nbsp;&nbsp;&nbsp;&nbsp;&nbsp;&nbsp;&nbsp;&nbsp;&nbsp;&nbsp;&nbsp;&nbsp;</span><span style="color:#D9CB94;">&lt;groupId&gt;</span><span style="color:#CDD0DA;">io.ktor</span><span style="color:#D9CB94;">&lt;/groupId&gt;</span></div><div class="a code" style="left:0px;top:108.97px;"><span style="color:#CDD0DA;">&nbsp;&nbsp;&nbsp;&nbsp;&nbsp;&nbsp;&nbsp;&nbsp;&nbsp;&nbsp;&nbsp;&nbsp;</span><span style="color:#D9CB94;">&lt;artifactId&gt;</span><span style="color:#CDD0DA;">ktor-server-netty-jvm</span><span style="color:#D9CB94;">&lt;/artifactId&gt;</span></div><div class="a code" style="left:0px;top:120.71px;"><span style="color:#CDD0DA;">&nbsp;&nbsp;&nbsp;&nbsp;&nbsp;&nbsp;&nbsp;&nbsp;&nbsp;&nbsp;&nbsp;&nbsp;</span><span style="color:#D9CB94;">&lt;version&gt;</span><span style="color:#CDD0DA;">${ktor.version}</span><span style="color:#D9CB94;">&lt;/version&gt;</span></div><div class="a code" style="left:0px;top:132.44px;"><span style="color:#CDD0DA;">&nbsp;&nbsp;&nbsp;&nbsp;&nbsp;&nbsp;&nbsp;&nbsp;</span><span style="color:#D9CB94;">&lt;/dependency&gt;</span></div><div class="a code" style="left:0px;top:144.18px;"><span style="color:#CDD0DA;">&nbsp;&nbsp;&nbsp;&nbsp;&nbsp;&nbsp;&nbsp;&nbsp;</span><span style="color:#D9CB94;">&lt;dependency&gt;</span></div><div class="a code" style="left:0px;top:155.92px;"><span style="color:#CDD0DA;">&nbsp;&nbsp;&nbsp;&nbsp;&nbsp;&nbsp;&nbsp;&nbsp;&nbsp;&nbsp;&nbsp;&nbsp;</span><span style="color:#D9CB94;">&lt;groupId&gt;</span><span style="color:#CDD0DA;">io.ktor</span><span style="color:#D9CB94;">&lt;/groupId&gt;</span></div><div class="a code" style="left:0px;top:167.65px;"><span style="color:#CDD0DA;">&nbsp;&nbsp;&nbsp;&nbsp;&nbsp;&nbsp;&nbsp;&nbsp;&nbsp;&nbsp;&nbsp;&nbsp;</span><span style="color:#D9CB94;">&lt;artifactId&gt;</span><span style="color:#CDD0DA;">ktor-server-core</span><span style="color:#D9CB94;">&lt;/artifactId&gt;</span></div><div class="a code" style="left:0px;top:179.38px;"><span style="color:#CDD0DA;">&nbsp;&nbsp;&nbsp;&nbsp;&nbsp;&nbsp;&nbsp;&nbsp;&nbsp;&nbsp;&nbsp;&nbsp;</span><span style="color:#D9CB94;">&lt;version&gt;</span><span style="color:#CDD0DA;">${ktor.version}</span><span style="color:#D9CB94;">&lt;/version&gt;</span></div><div class="a code" style="left:0px;top:191.12px;"><span style="color:#CDD0DA;">&nbsp;&nbsp;&nbsp;&nbsp;&nbsp;&nbsp;&nbsp;&nbsp;</span><span style="color:#D9CB94;">&lt;/dependency&gt;</span></div><div class="a code" style="left:0px;top:202.86px;"><span style="color:#CDD0DA;">&nbsp;&nbsp;&nbsp;&nbsp;&nbsp;&nbsp;&nbsp;&nbsp;</span><span style="color:#D9CB94;">&lt;dependency&gt;</span></div><div class="a code" style="left:0px;top:214.59px;"><span style="color:#CDD0DA;">&nbsp;&nbsp;&nbsp;&nbsp;&nbsp;&nbsp;&nbsp;&nbsp;&nbsp;&nbsp;&nbsp;&nbsp;</span><span style="color:#D9CB94;">&lt;groupId&gt;</span><span style="color:#CDD0DA;">io.ktor</span><span style="color:#D9CB94;">&lt;/groupId&gt;</span></div><div class="a code" style="left:0px;top:226.32px;"><span style="color:#CDD0DA;">&nbsp;&nbsp;&nbsp;&nbsp;&nbsp;&nbsp;&nbsp;&nbsp;&nbsp;&nbsp;&nbsp;&nbsp;</span><span style="color:#D9CB94;">&lt;artifactId&gt;</span><span style="color:#CDD0DA;">ktor-websockets</span><span style="color:#D9CB94;">&lt;/artifactId&gt;</span></div><div class="a code" style="left:0px;top:238.06px;"><span style="color:#CDD0DA;">&nbsp;&nbsp;&nbsp;&nbsp;&nbsp;&nbsp;&nbsp;&nbsp;&nbsp;&nbsp;&nbsp;&nbsp;</span><span style="color:#D9CB94;">&lt;version&gt;</span><span style="color:#CDD0DA;">${ktor.version}</span><span style="color:#D9CB94;">&lt;/version&gt;</span></div><div class="a code" style="left:0px;top:249.79px;"><span style="color:#CDD0DA;">&nbsp;&nbsp;&nbsp;&nbsp;&nbsp;&nbsp;&nbsp;&nbsp;</span><span style="color:#D9CB94;">&lt;/dependency&gt;</span></div><div class="a code" style="left:0px;top:261.53px;"><span style="color:#CDD0DA;">&nbsp;&nbsp;&nbsp;&nbsp;&nbsp;&nbsp;&nbsp;&nbsp;</span><span style="color:#D9CB94;">&lt;dependency&gt;</span></div><div class="a code" style="left:0px;top:273.26px;"><span style="color:#CDD0DA;">&nbsp;&nbsp;&nbsp;&nbsp;&nbsp;&nbsp;&nbsp;&nbsp;&nbsp;&nbsp;&nbsp;&nbsp;</span><span style="color:#D9CB94;">&lt;groupId&gt;</span><span style="color:#CDD0DA;">io.ktor</span><span style="color:#D9CB94;">&lt;/groupId&gt;</span></div><div class="a code" style="left:0px;top:285.0px;"><span style="color:#CDD0DA;">&nbsp;&nbsp;&nbsp;&nbsp;&nbsp;&nbsp;&nbsp;&nbsp;&nbsp;&nbsp;&nbsp;&nbsp;</span><span style="color:#D9CB94;">&lt;artifactId&gt;</span><span style="color:#CDD0DA;">ktor-server-websockets</span><span style="color:#D9CB94;">&lt;/artifactId&gt;</span></div><div class="a code" style="left:0px;top:296.73px;"><span style="color:#CDD0DA;">&nbsp;&nbsp;&nbsp;&nbsp;&nbsp;&nbsp;&nbsp;&nbsp;&nbsp;&nbsp;&nbsp;&nbsp;</span><span style="color:#D9CB94;">&lt;version&gt;</span><span style="color:#CDD0DA;">${ktor.version}</span><span style="color:#D9CB94;">&lt;/version&gt;</span></div><div class="a code" style="left:0px;top:308.47px;"><span style="color:#CDD0DA;">&nbsp;&nbsp;&nbsp;&nbsp;&nbsp;&nbsp;&nbsp;&nbsp;</span><span style="color:#D9CB94;">&lt;/dependency&gt;</span></div><div class="a code" style="left:0px;top:320.2px;">&nbsp;&nbsp;&nbsp;&nbsp;<span style="color:#D5B778;">&lt;/dependencies&gt;</span></div><div class="a code" style="left:0px;top:331.94px;"><span style="color:#D5B778;">&lt;/project&gt;</span></div></div><div class="a" style="left:773px;top:378px;width:5px;height:86px;background:#48494D;"></div><div class="a" style="left:771px;top:390px;width:6px;height:1px;background:#9DA0A8;"></div><div class="a" style="left:771px;top:403px;width:6px;height:1px;background:#9DA0A8;"></div><div class="a" style="left:771px;top:415px;width:6px;height:1px;background:#9DA0A8;"></div><div class="a" style="left:771px;top:427px;width:6px;height:1px;background:#9DA0A8;"></div><div class="a" style="left:771px;top:440px;width:6px;height:1px;background:#9DA0A8;"></div><div class="a" style="left:770px;top:104px;width:8px;height:1.2px;background:#5E9C86;"></div><div class="a" style="left:512.5px;top:460px;width:140px;height:4px;background:#48494D;"></div><div class="a" style="left:481px;top:465px;width:298px;height:13px;background:#1E1F22;"></div><div class="a" style="left:481px;top:464.5px;width:298px;height:1px;background:#2B2D30;"></div><div class="a t" style="left:486px;top:467.5px;color:#A4A8B0;font-size:7.5px;">project</div><svg class="a" style="left:514px;top:469px;" width="5" height="6" viewBox="0 0 5 6" fill="none"><path d="M1.3 1L3.5 3L1.3 5" stroke="#4B5059" stroke-width="0.8"/></svg><div class="a t" style="left:523px;top:467.5px;color:#A4A8B0;font-size:7.5px;">dependencies</div><div class="a" style="left:778px;top:22px;width:2px;height:456px;background:#1E1F22;"></div><div class="a" style="left:780px;top:22px;width:20px;height:456px;background:#2B2D30;"></div><svg class="a" style="left:784px;top:26px;" width="12" height="12" viewBox="0 0 12 12" fill="none"><path d="M3 8.5V5.3C3 3.6 4.3 2.3 6 2.3C7.7 2.3 9 3.6 9 5.3V8.5L10 9.5H2Z" stroke="#CED0D6" stroke-width="0.9" stroke-linejoin="round"/><path d="M5 10.5H7" stroke="#CED0D6" stroke-width="0.9"/></svg><div class="a t" style="left:784px;top:48.2px;color:#C4C7CD;font-size:10.5px;"><i>m</i></div><div class="a" style="left:345px;top:137.5px;width:234px;height:34px;background:#2B2D30;border:1px solid #393B40;box-sizing:border-box;"></div><div class="a t" style="left:350.5px;top:143px;color:#DFE1E5;font-size:7.75px;">Unresolved reference: websocket</div><div class="a t" style="left:350.5px;top:160px;color:#6A8DD8;font-size:7.6px;">Rename reference</div><div class="a t" style="left:418px;top:160px;color:#6F737A;font-size:7.7px;">Alt+Shift+Enter</div><div class="a t" style="left:483px;top:160px;color:#6A8DD8;font-size:7.6px;">More actions...</div><div class="a t" style="left:539px;top:160px;color:#6F737A;font-size:7.6px;">Alt+Enter</div><svg class="a" style="left:572px;top:144px;" width="4" height="8" viewBox="0 0 4 8" fill="none"><circle cx="2" cy="1" r="0.6" fill="#9DA0A8"/><circle cx="2" cy="4" r="0.6" fill="#9DA0A8"/><circle cx="2" cy="7" r="0.6" fill="#9DA0A8"/></svg><div class="a" style="left:0px;top:477.5px;width:800px;height:0.5px;background:#1E1F22;"></div><div class="a" style="left:0px;top:478px;width:800px;height:16px;background:#2B2D30;"></div><div class="a" style="left:8px;top:483.5px;width:4.5px;height:4.5px;background:#2a3a6a;border:0.9px solid #5C86E8;border-radius:1px;box-sizing:border-box;"></div><div class="a t" style="left:14px;top:481px;color:#A4A8B0;font-size:7.2px;">Keritial</div><svg class="a" style="left:40px;top:482.5px;" width="5" height="7" viewBox="0 0 5 7" fill="none"><path d="M1.2 1L3.7 3.5L1.2 6" stroke="#8C9099" stroke-width="0.8"/></svg><div class="a" style="left:49px;top:483.5px;width:4.5px;height:4.5px;background:#2a3a6a;border:0.9px solid #5C86E8;border-radius:1px;box-sizing:border-box;"></div><div class="a t" style="left:56px;top:481px;color:#A4A8B0;font-size:7.2px;">KeritialRemote</div><svg class="a" style="left:108px;top:482.5px;" width="5" height="7" viewBox="0 0 5 7" fill="none"><path d="M1.2 1L3.7 3.5L1.2 6" stroke="#8C9099" stroke-width="0.8"/></svg><div class="a t" style="left:117px;top:481px;color:#A4A8B0;font-size:7.2px;">src</div><svg class="a" style="left:130.5px;top:482.5px;" width="5" height="7" viewBox="0 0 5 7" fill="none"><path d="M1.2 1L3.7 3.5L1.2 6" stroke="#8C9099" stroke-width="0.8"/></svg><div class="a t" style="left:140px;top:481px;color:#A4A8B0;font-size:7.2px;">main</div><svg class="a" style="left:158.5px;top:482.5px;" width="5" height="7" viewBox="0 0 5 7" fill="none"><path d="M1.2 1L3.7 3.5L1.2 6" stroke="#8C9099" stroke-width="0.8"/></svg><div class="a t" style="left:168px;top:481px;color:#A4A8B0;font-size:7.2px;">kotlin</div><svg class="a" style="left:189.5px;top:482.5px;" width="5" height="7" viewBox="0 0 5 7" fill="none"><path d="M1.2 1L3.7 3.5L1.2 6" stroke="#8C9099" stroke-width="0.8"/></svg><div class="a t" style="left:199px;top:481px;color:#A4A8B0;font-size:7.2px;">io</div><svg class="a" style="left:210px;top:482.5px;" width="5" height="7" viewBox="0 0 5 7" fill="none"><path d="M1.2 1L3.7 3.5L1.2 6" stroke="#8C9099" stroke-width="0.8"/></svg><div class="a t" style="left:217px;top:481px;color:#A4A8B0;font-size:7.2px;">github</div><svg class="a" style="left:241.5px;top:482.5px;" width="5" height="7" viewBox="0 0 5 7" fill="none"><path d="M1.2 1L3.7 3.5L1.2 6" stroke="#8C9099" stroke-width="0.8"/></svg><div class="a t" style="left:251px;top:481px;color:#A4A8B0;font-size:7.2px;">keritial</div><svg class="a" style="left:278px;top:482.5px;" width="5" height="7" viewBox="0 0 5 7" fill="none"><path d="M1.2 1L3.7 3.5L1.2 6" stroke="#8C9099" stroke-width="0.8"/></svg><div class="a t" style="left:286px;top:481px;color:#A4A8B0;font-size:7.2px;">keritialremote</div><svg class="a" style="left:336px;top:482.5px;" width="5" height="7" viewBox="0 0 5 7" fill="none"><path d="M1.2 1L3.7 3.5L1.2 6" stroke="#8C9099" stroke-width="0.8"/></svg><svg class="a" style="left:344.5px;top:481.5px;" width="10" height="10" viewBox="0 0 10 10" fill="none"><circle cx="4.3" cy="4.3" r="3.5" fill="#26335A" stroke="#5B7FE0" stroke-width="0.9"/><path d="M5.7 3C5.4 2.6 4.9 2.4 4.4 2.4C3.4 2.4 2.6 3.2 2.6 4.3C2.6 5.4 3.4 6.2 4.4 6.2C4.9 6.2 5.4 6 5.7 5.6" stroke="#C9D6FF" stroke-width="0.85"/><path d="M6.4 8.7V6.7H8.8V8.7Z" stroke="#9B7BE0" stroke-width="0.7" fill="#2B2D30"/></svg><div class="a t" style="left:355px;top:481px;color:#A4A8B0;font-size:7.2px;">controller</div><svg class="a" style="left:391.5px;top:482.5px;" width="5" height="7" viewBox="0 0 5 7" fill="none"><path d="M1.2 1L3.7 3.5L1.2 6" stroke="#8C9099" stroke-width="0.8"/></svg><svg class="a" style="left:399.5px;top:481.5px;" width="10" height="10" viewBox="0 0 10 10" fill="none"><circle cx="4.3" cy="4.3" r="3.5" fill="#5A2E24" stroke="#E06B4A" stroke-width="0.9"/><path d="M5.7 3C5.4 2.6 4.9 2.4 4.4 2.4C3.4 2.4 2.6 3.2 2.6 4.3C2.6 5.4 3.4 6.2 4.4 6.2C4.9 6.2 5.4 6 5.7 5.6" stroke="#FFD6C8" stroke-width="0.85"/><path d="M6.4 8.7V6.7H8.8V8.7Z" stroke="#9B7BE0" stroke-width="0.7" fill="#2B2D30"/></svg><div class="a t" style="left:409.5px;top:481px;color:#A4A8B0;font-size:7.2px;">&lt;class initializer&gt;</div><div class="a t" style="left:661.5px;top:481px;color:#A4A8B0;font-size:7.2px;">16:32</div><div class="a t" style="left:688px;top:481px;color:#A4A8B0;font-size:7.2px;">CRLF</div><div class="a t" style="left:713.5px;top:481px;color:#A4A8B0;font-size:7.2px;">UTF-8</div><div class="a t" style="left:743.5px;top:481px;color:#A4A8B0;font-size:7.2px;">4 spaces</div><svg class="a" style="left:782px;top:481px;" width="10" height="11" viewBox="0 0 10 11" fill="none"><rect x="1.3" y="4.8" width="5" height="4.2" stroke="#A4A8B0" stroke-width="0.85"/><path d="M4.8 4.8V3.2C4.8 2 5.6 1.4 6.5 1.4C7.4 1.4 8.1 2 8.1 3.2V3.8" stroke="#A4A8B0" stroke-width="0.85"/></svg></body></html>
